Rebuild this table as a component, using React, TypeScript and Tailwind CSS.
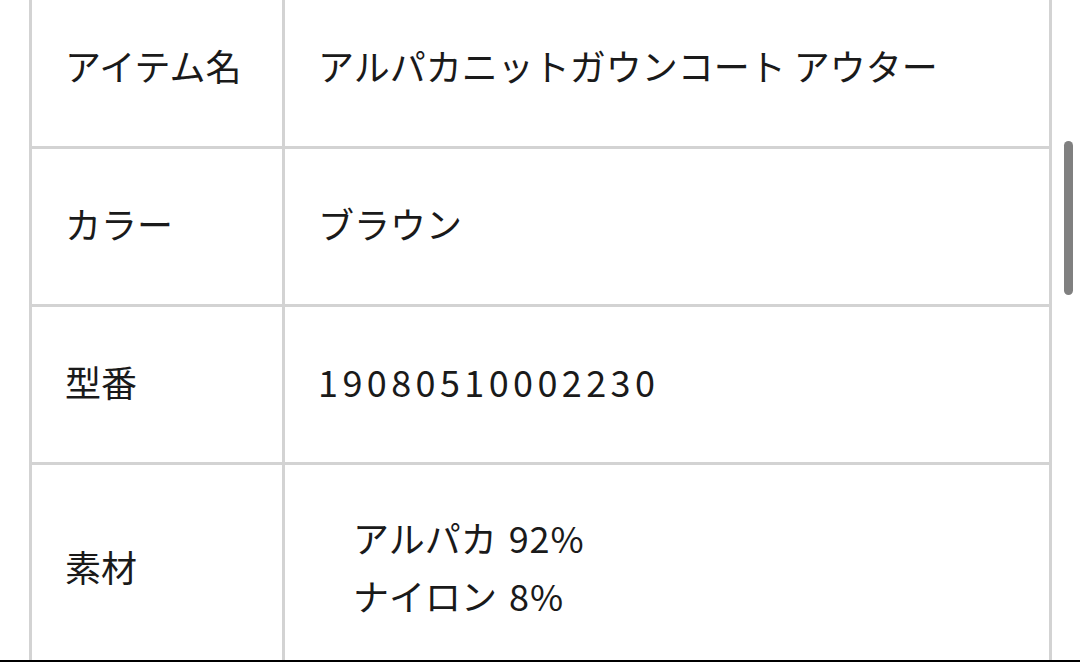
const rows = [
  { label: "アイテム名", value: "アルパカニットガウンコート アウター" },
  { label: "カラー", value: "ブラウン" },
  { label: "型番", value: "19080510002230", num: true },
]

const materials = [
  { name: "アルパカ", pct: "92%" },
  { name: "ナイロン", pct: "8%" },
]

export default function App() {
  return (
    <div className="relative flex h-[662px] w-[1080px] flex-col bg-white text-[36px] text-[#1a1a1a] font-['Noto_Sans_CJK_JP','Noto_Sans',sans-serif]">
      <div className="flex-1 overflow-hidden">
        <div className="-mt-[9px] ml-[29px] w-[1023px] border-x-[3px] border-[#d3d3d3]">
          {rows.map((r) => (
            <div key={r.label} className="grid h-[158px] grid-cols-[253px_1fr] border-b-[3px] border-[#d3d3d3]">
              <div className="flex items-center border-r-[3px] border-[#d3d3d3] pb-[7px] pl-[33px]">{r.label}</div>
              <div className="flex items-center pb-[7px] pl-[33px]">
                {r.num ? <span className="tracking-[4.4px]">{r.value}</span> : r.value}
              </div>
            </div>
          ))}
          <div className="grid h-[208px] grid-cols-[253px_1fr]">
            <div className="flex items-center border-r-[3px] border-[#d3d3d3] pb-[7px] pl-[33px]">素材</div>
            <div className="flex flex-col justify-center pb-[7px] pl-[68px] leading-[58px]">
              {materials.map((m) => (
                <div key={m.name}>
                  {m.name}
                  <span className="ml-[12px] tracking-[1px]">{m.pct}</span>
                </div>
              ))}
            </div>
          </div>
        </div>
      </div>
      <div className="h-[2px] bg-black"></div>
      <div className="absolute left-[1064px] top-[141px] h-[154px] w-[9px] rounded-full bg-[#808080]"></div>
    </div>
  )
}
